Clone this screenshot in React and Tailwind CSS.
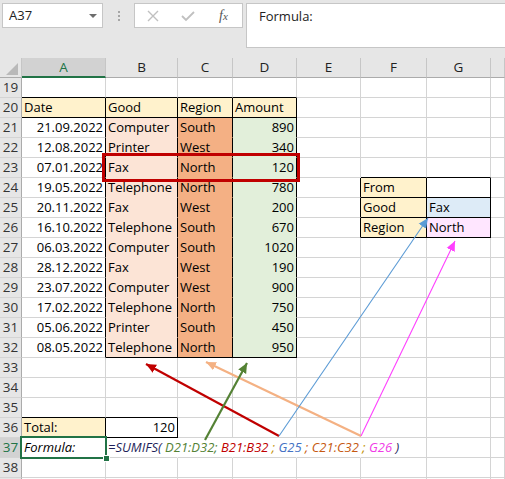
import React from 'react';

const COLS = ['A', 'B', 'C', 'D', 'E', 'F', 'G', 'H'];
const COL_W = ['w-[84px]', 'w-[72px]', 'w-[55px]', 'w-[64px]', 'w-[64px]', 'w-[66px]', 'w-[64px]', 'flex-1'];

const FILLS = {
  cream: { bg: 'bg-[#fff2cc]', b: 'border-b-[#fff2cc]', r: 'border-r-[#fff2cc]' },
  pink: { bg: 'bg-[#fce4d6]', b: 'border-b-[#fce4d6]', r: 'border-r-[#fce4d6]' },
  orange: { bg: 'bg-[#f4b084]', b: 'border-b-[#f4b084]', r: 'border-r-[#f4b084]' },
  green: { bg: 'bg-[#e2efda]', b: 'border-b-[#e2efda]', r: 'border-r-[#e2efda]' },
  blue: { bg: 'bg-[#ddebf7]', b: 'border-b-[#ddebf7]', r: 'border-r-[#ddebf7]' },
  rose: { bg: 'bg-[#ffe6ff]', b: 'border-b-[#ffe6ff]', r: 'border-r-[#ffe6ff]' }
};

const sales = [
  ['21.09.2022', 'Computer', 'South', 890],
  ['12.08.2022', 'Printer', 'West', 340],
  ['07.01.2022', 'Fax', 'North', 120],
  ['19.05.2022', 'Telephone', 'North', 780],
  ['20.11.2022', 'Fax', 'West', 200],
  ['16.10.2022', 'Telephone', 'South', 670],
  ['06.03.2022', 'Computer', 'South', 1020],
  ['28.12.2022', 'Fax', 'West', 190],
  ['23.07.2022', 'Computer', 'West', 900],
  ['17.02.2022', 'Telephone', 'North', 750],
  ['05.06.2022', 'Printer', 'South', 450],
  ['08.05.2022', 'Telephone', 'North', 950]
];

const formula = [
  ['=SUMIFS(', 'text-[#1e1e5a]'],
  [' D21:D32;', 'text-[#548235]'],
  [' B21:B32 ', 'text-[#c00000]'],
  [';', 'text-[#bf8f00]'],
  [' G25 ', 'text-[#4472c4]'],
  [';', 'text-[#c65911]'],
  [' C21:C32 ', 'text-[#c65911]'],
  [';', 'text-[#bf8f00]'],
  [' G26 ', 'text-[#f03ce6]'],
  [')', 'text-[#1e1e5a]']
];

function cellInfo(r, c) {
  if (r === 20 && c <= 3) return { text: ['Date', 'Good', 'Region', 'Amount'][c], fill: 'cream' };
  if (r >= 21 && r <= 32 && c <= 3) {
    const row = sales[r - 21];
    if (c === 0) return { text: row[0], right: true };
    if (c === 1) return { text: row[1], fill: 'pink' };
    if (c === 2) return { text: row[2], fill: 'orange' };
    return { text: row[3], fill: 'green', right: true };
  }
  if (r === 24 && c === 5) return { text: 'From', fill: 'cream' };
  if (r === 25 && c === 5) return { text: 'Good', fill: 'cream' };
  if (r === 26 && c === 5) return { text: 'Region', fill: 'cream' };
  if (r === 25 && c === 6) return { text: 'Fax', fill: 'blue' };
  if (r === 26 && c === 6) return { text: 'North', fill: 'rose' };
  if (r === 36 && c === 0) return { text: 'Total:', fill: 'cream' };
  if (r === 36 && c === 1) return { text: 120, right: true };
  if (r === 37 && c === 0) return { text: 'Formula:', italic: true };
  if (r === 37 && c === 1) return { formula: true };
  return {};
}

// black line on the right of column c in row r
function vBlack(r, c) {
  if (r >= 20 && r <= 32 && c <= 3) return true;
  if (r >= 24 && r <= 26 && c >= 4 && c <= 6) return true;
  if (r === 36 && c <= 1) return true;
  return false;
}

// black line under row r in column c
function hBlack(r, c) {
  if ((r === 19 || r === 20) && c <= 3) return true;
  if (r === 32 && c >= 1 && c <= 3) return true;
  if (r >= 23 && r <= 26 && c >= 5 && c <= 6) return true;
  if ((r === 35 || r === 36) && c <= 1) return true;
  return false;
}

function Cell({ r, c }) {
  const info = cellInfo(r, c);
  const fill = info.fill ? FILLS[info.fill] : null;
  let right = fill ? fill.r : 'border-r-[#d4d4d4]';
  if (r === 37 && c >= 1 && c <= 4) right = 'border-r-white';
  if (vBlack(r, c)) right = 'border-r-black';
  let bottom = fill ? fill.b : 'border-b-[#d4d4d4]';
  if (hBlack(r, c)) bottom = 'border-b-black';

  return (
    <div
      className={`flex h-5 shrink-0 items-end border-r border-b px-[2px] pb-[1px] leading-[17px] whitespace-nowrap ${COL_W[c]} ${right} ${bottom} ${fill ? fill.bg : ''} ${info.right ? 'justify-end' : ''} ${info.formula ? 'relative z-10 overflow-visible' : 'overflow-hidden'} ${info.italic ? 'italic' : ''}`}
    >
      {info.formula ? (
        <span className="italic">
          {formula.map(([t, cls], i) => (
            <span key={i} className={`whitespace-pre ${cls}`}>{t}</span>
          ))}
        </span>
      ) : (
        info.text
      )}
    </div>
  );
}

function Row({ r }) {
  const selected = r === 37;
  return (
    <div className="flex">
      <div
        className={`flex h-5 w-[22px] shrink-0 items-center justify-center border-r border-b border-r-[#ababab] border-b-[#d4d4d4] text-[13.5px] ${selected ? 'bg-[#d2d2d2] text-[#217346]' : 'bg-[#e6e6e6] text-[#333]'}`}
      >
        {r <= 38 ? r : ''}
      </div>
      {COLS.map((_, c) => (
        <Cell key={c} r={r} c={c} />
      ))}
    </div>
  );
}

function FormulaBar() {
  return (
    <div className="flex h-[58px] items-start gap-0 bg-[#e6e6e6] pt-[3px] pl-[2px]">
      <div className="flex h-[25px] w-[101px] items-center justify-between border border-[#c6c6c6] bg-white pr-[5px] pl-[6px] text-[13px] text-[#222]">
        <span>A37</span>
        <span className="h-0 w-0 border-x-[4px] border-t-[4px] border-x-transparent border-t-[#6d6d6d]" />
      </div>
      <div className="flex h-[25px] w-[31px] flex-col items-center justify-center gap-[2px]">
        <span className="h-[2px] w-[2px] bg-[#a6a6a6]" />
        <span className="h-[2px] w-[2px] bg-[#a6a6a6]" />
        <span className="h-[2px] w-[2px] bg-[#a6a6a6]" />
      </div>
      <div className="flex h-[25px] w-[109px] items-center border border-[#c6c6c6] bg-white">
        <svg width="12" height="12" viewBox="0 0 12 12" className="ml-[12px]">
          <path d="M1 1 L11 11 M11 1 L1 11" stroke="#c0c0c0" strokeWidth="1.4" fill="none" />
        </svg>
        <svg width="14" height="12" viewBox="0 0 14 12" className="ml-[22px]">
          <path d="M1 6 L5 10 L13 2" stroke="#c0c0c0" strokeWidth="1.8" fill="none" />
        </svg>
        <span className="ml-[24px] font-['Liberation_Serif',serif] text-[14px] text-[#555] italic">
          f<span className="text-[11px]">x</span>
        </span>
      </div>
      <div className="ml-[3px] h-[45px] flex-1 border border-r-0 border-[#c6c6c6] bg-white pt-[3px] pl-[12px] text-[13px] text-[#222]">
        Formula:
      </div>
    </div>
  );
}

function ColumnHeader() {
  return (
    <div className="flex h-5 bg-[#e6e6e6] text-[13.5px] text-[#222]">
      <div className="relative w-[22px] shrink-0 border-r border-b border-r-[#c6c6c6] border-b-[#ababab]">
        <svg width="22" height="19" className="absolute inset-0">
          <path d="M6 17 L18 17 L18 5 Z" fill="#b9b9b9" />
        </svg>
      </div>
      {COLS.map((col, c) => (
        <div
          key={col}
          className={`flex shrink-0 items-center justify-center border-r ${COL_W[c]} ${c === 0 ? 'border-b-2 border-r-[#c6c6c6] border-b-[#217346] bg-[#d2d2d2] text-[#217346]' : 'border-b border-r-[#c6c6c6] border-b-[#ababab]'}`}
        >
          {c < 7 ? col : ''}
        </div>
      ))}
    </div>
  );
}

function Arrows() {
  const lines = [
    { x1: 279, y1: 436, x2: 146, y2: 364, color: '#c00000', w: 2.2, id: 'red' },
    { x1: 361, y1: 436, x2: 206, y2: 362, color: '#f4b183', w: 2.2, id: 'orange' },
    { x1: 205, y1: 440, x2: 247, y2: 363, color: '#548235', w: 2.2, id: 'green' },
    { x1: 279, y1: 436, x2: 428, y2: 218, color: '#5b9bd5', w: 1.1, id: 'blue' },
    { x1: 361, y1: 436, x2: 455, y2: 241, color: '#ff40ff', w: 1.1, id: 'magenta' }
  ];
  return (
    <svg width="505" height="479" className="pointer-events-none absolute top-0 left-0 z-20">
      <defs>
        {lines.map((l) => (
          <marker
            key={l.id}
            id={`head-${l.id}`}
            markerUnits="userSpaceOnUse"
            markerWidth="12"
            markerHeight="10"
            refX="10"
            refY="5"
            orient="auto"
          >
            <path d="M0 0.5 L10 5 L0 9.5 Z" fill={l.color} />
          </marker>
        ))}
      </defs>
      {lines.map((l) => (
        <line
          key={l.id}
          x1={l.x1}
          y1={l.y1}
          x2={l.x2}
          y2={l.y2}
          stroke={l.color}
          strokeWidth={l.w}
          markerEnd={`url(#head-${l.id})`}
        />
      ))}
    </svg>
  );
}

export default function App() {
  const rows = [];
  for (let r = 19; r <= 39; r++) rows.push(r);

  return (
    <div className="relative h-[479px] w-[505px] overflow-hidden bg-white font-['Open_Sans',sans-serif] text-[13px] text-black">
      <FormulaBar />
      <ColumnHeader />
      {rows.map((r) => (
        <Row key={r} r={r} />
      ))}

      {/* highlighted match in row 23 */}
      <div className="pointer-events-none absolute top-[153px] left-[102px] z-20 h-[29px] w-[198px] border-[3px] border-[#c00000]" />

      {/* active cell A37 */}
      <div className="pointer-events-none absolute top-[436px] left-[20px] z-20 h-[23px] w-[87px] border-2 border-[#217346]" />
      <div className="pointer-events-none absolute top-[455px] left-[103px] z-30 h-[7px] w-[7px] border border-white bg-[#217346]" />

      <Arrows />
    </div>
  );
}
